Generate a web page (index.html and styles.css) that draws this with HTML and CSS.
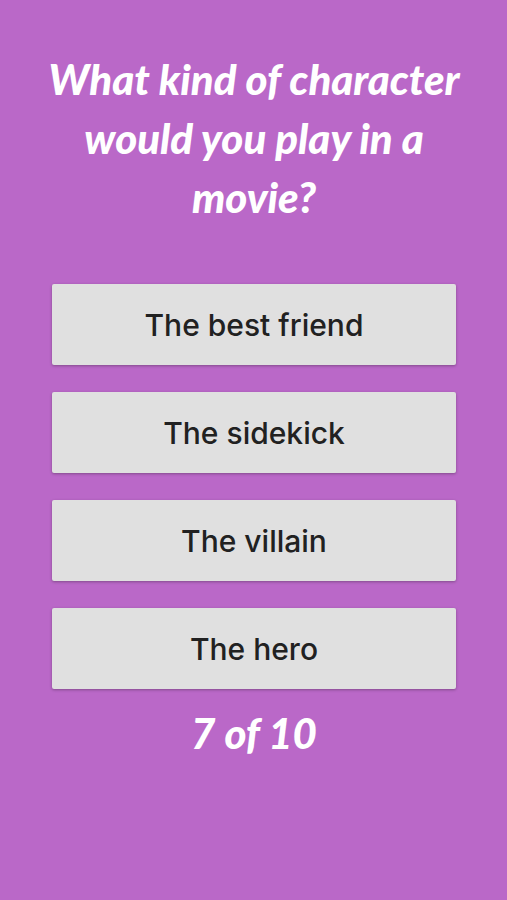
FILE: index.html
```html
<!DOCTYPE html>
<html lang="en">

<head>
    <meta charset="UTF-8">
    <meta name="viewport" content="width=device-width, initial-scale=1.0">
    <title>Personality Quiz</title>
    <link rel="stylesheet" href="styles.css">
</head>

<body>
    <main class="quiz">
        <h1 class="question">What kind of character would you play in a movie?</h1>
        <div class="answers">
            <button type="button" class="answer">The best friend</button>
            <button type="button" class="answer">The sidekick</button>
            <button type="button" class="answer">The villain</button>
            <button type="button" class="answer">The hero</button>
        </div>
        <p class="progress">7 of 10</p>
    </main>
</body>

</html>
```

FILE: styles.css
```css
* {
    box-sizing: border-box;
}

body {
    margin: 0;
    min-height: 100vh;
    background-color: #ba68c8;
    font-family: Inter, "Liberation Sans", sans-serif;
}

.quiz {
    padding: 50px 35px 50px 36px;
    text-align: center;
}

/* Headline lettering, shared by the question and the counter */
.question,
.progress {
    margin: 0;
    color: #fff;
    font-family: Lato, sans-serif;
    font-style: italic;
    font-weight: 900;
    font-size: 42px;
    line-height: 59px;
}

.answers {
    display: flex;
    flex-direction: column;
    gap: 27px;
    padding: 0 16px;
    margin: 57px 0 15px;
}

.answer {
    height: 81px;
    border: none;
    border-radius: 2px;
    background-color: #e0e0e0;
    box-shadow: 0 1px 3px rgba(0, 0, 0, 0.3);
    color: #212121;
    font-family: inherit;
    font-size: 30px;
    font-weight: 500;
    cursor: pointer;
}
```
